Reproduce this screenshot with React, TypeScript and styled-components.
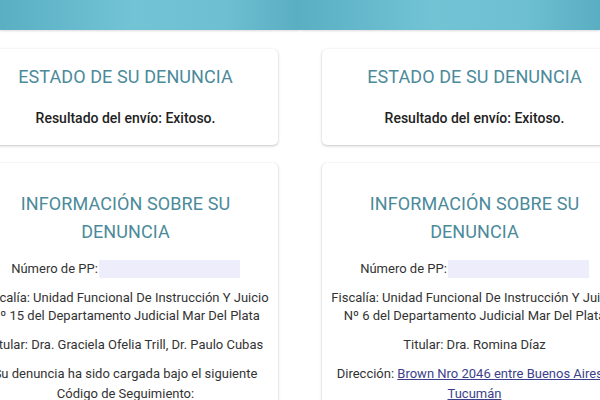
import React from 'react';
import styled, { createGlobalStyle } from 'styled-components';

const GlobalStyle = createGlobalStyle`
	body {
		margin: 0;
		background: #ffffff;
		font-family: Roboto, 'Liberation Sans', sans-serif;
	}
`;

const Screen = styled.div`
	display: flex;
	width: 600px;
	height: 400px;
	overflow: hidden;
	background: #ffffff;
`;

const Phone = styled.div`
	width: 300px;
	flex: none;
	overflow: hidden;
	display: flex;
	flex-direction: column;
`;

const Header = styled.div`
	height: 30px;
	flex: none;
	background: linear-gradient(90deg, #5aafc3 0%, #72c4d5 45%, #6dbfd1 75%, #5aaec2 100%);
	box-shadow: 0 1px 2px rgba(0, 0, 0, 0.15);
`;

const Body = styled.div<{ $shift: number }>`
	width: 350px;
	margin-left: ${(p) => p.$shift}px;
	padding: 19px 0 0 22px;
	display: flex;
	flex-direction: column;
	gap: 18px;
	box-sizing: border-box;
`;

const Card = styled.div<{ $top: number }>`
	width: 305px;
	box-sizing: border-box;
	padding: ${(p) => p.$top}px 0 17px;
	background: #ffffff;
	border-radius: 5px;
	box-shadow: 0 1px 3px rgba(0, 0, 0, 0.22), 0 0 1px rgba(0, 0, 0, 0.08);
	display: flex;
	flex-direction: column;
	align-items: center;
	text-align: center;
`;

const Title = styled.h2<{ $size: number; $line: number }>`
	margin: 0;
	font-weight: 400;
	font-size: ${(p) => p.$size}px;
	line-height: ${(p) => p.$line}px;
	color: #4b8a9a;
	letter-spacing: 0.1px;
	white-space: nowrap;
`;

const Result = styled.p`
	margin: 21px 0 0;
	font-size: 14px;
	line-height: 20px;
	font-weight: 500;
	color: #222222;
`;

const Info = styled.div<{ $gap: number; $line?: number }>`
	margin: ${(p) => p.$gap}px 0 0;
	font-size: 13px;
	line-height: ${(p) => p.$line ?? 18}px;
	color: #333333;
	display: flex;
	flex-direction: column;
	align-items: center;
	white-space: nowrap;
`;

const Row = styled.span`
	display: flex;
	align-items: center;
	justify-content: center;
`;

const Hidden = styled.span`
	display: inline-block;
	width: 141px;
	height: 18px;
	background: #ededfb;
	margin-left: 1px;
`;

const Link = styled.a`
	color: #3c3f8c;
	text-decoration: underline;
`;

type Side = {
	shift: number;
	fiscalia: string;
	titular: string;
	last: React.ReactNode;
};

const sides: Side[] = [
	{
		shift: -49,
		fiscalia: 'Nº 15 del Departamento Judicial Mar Del Plata',
		titular: 'Titular: Dra. Graciela Ofelia Trill, Dr. Paulo Cubas',
		last: (
			<>
				<Row>Su denuncia ha sido cargada bajo el siguiente</Row>
				<Row>Código de Seguimiento:</Row>
			</>
		)
	},
	{
		shift: 0,
		fiscalia: 'Nº 6 del Departamento Judicial Mar Del Plata',
		titular: 'Titular: Dra. Romina Díaz',
		last: (
			<>
				<Row>
					Dirección:&nbsp;<Link href='#'>Brown Nro 2046 entre Buenos Aires y</Link>
				</Row>
				<Row>
					<Link href='#'>Tucumán</Link>
				</Row>
			</>
		)
	}
];

const App = () => {
	return (
		<>
			<GlobalStyle />
			<Screen>
				{sides.map((s, i) => (
					<Phone key={i}>
						<Header />
						<Body $shift={s.shift}>
							<Card $top={18}>
								<Title $size={18} $line={20}>
									ESTADO DE SU DENUNCIA
								</Title>
								<Result>Resultado del envío: Exitoso.</Result>
							</Card>
							<Card $top={27}>
								<Title $size={18} $line={28}>
									INFORMACIÓN SOBRE SU
									<br />
									DENUNCIA
								</Title>
								<Info $gap={14}>
									<Row>
										Número de PP:
										<Hidden />
									</Row>
								</Info>
								<Info $gap={11}>
									<Row>Fiscalía: Unidad Funcional De Instrucción Y Juicio</Row>
									<Row>{s.fiscalia}</Row>
								</Info>
								<Info $gap={11}>
									<Row>{s.titular}</Row>
								</Info>
								<Info $gap={10} $line={19.5}>
									{s.last}
								</Info>
							</Card>
						</Body>
					</Phone>
				))}
			</Screen>
		</>
	);
};

export default App;
